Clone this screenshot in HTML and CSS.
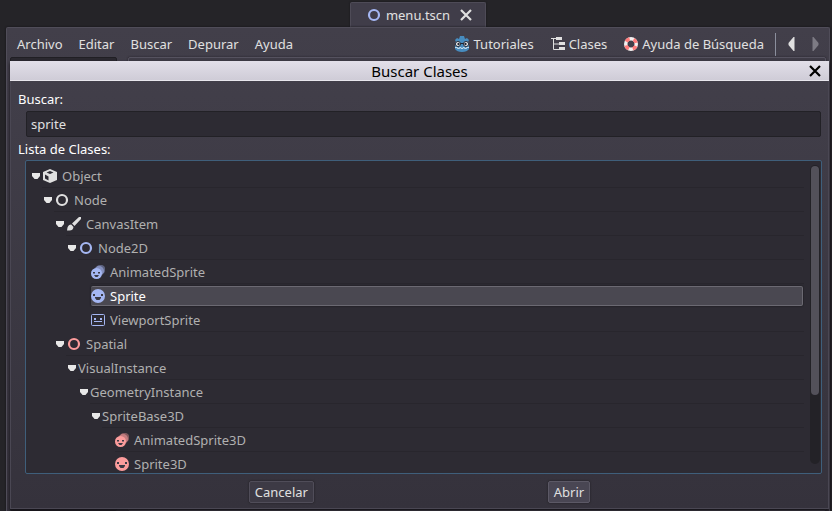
FILE: index.html
```html
<!DOCTYPE html>
<html lang="es">
<head>
<meta charset="utf-8">
<meta name="viewport" content="width=device-width, initial-scale=1">
<title>Buscar Clases</title>
<link rel="stylesheet" href="styles.css">
</head>
<body>
<svg class="defs" aria-hidden="true">
  <symbol id="ring" viewBox="0 0 14 14"><circle cx="7" cy="7" r="5" fill="none" stroke="currentColor" stroke-width="2.200"/></symbol>
  <symbol id="close" viewBox="0 0 12 12"><path d="M1 1l10 10M11 1L1 11" fill="none" stroke="currentColor" stroke-width="2.200"/></symbol>
  <symbol id="fold" viewBox="0 0 8 6"><path d="M0 0h8v3L5.500 6h-3L0 3z" fill="currentColor"/></symbol>
  <symbol id="face" viewBox="0 0 14 14">
    <circle cx="7" cy="7" r="7" fill="currentColor"/>
    <path d="M2 5h2v2H2zM10 5h2v2h-2zM4 8h6v1L8.500 11h-3L4 9z" fill="#3a3944"/>
  </symbol>
  <symbol id="faces" viewBox="0 0 14 14">
    <circle cx="9.500" cy="4.500" r="4.800" fill="currentColor" opacity=".4"/>
    <circle cx="8" cy="6" r="5" fill="currentColor" opacity=".55"/>
    <circle cx="5.500" cy="8.500" r="5.500" fill="currentColor"/>
    <path d="M2 7h2v1.500H2zM7 7h2v1.500H7zM3 10h5l-1.500 2h-2z" fill="#3a3944"/>
  </symbol>
</svg>

<main class="editor">
  <div class="scene-tabs">
    <div class="tab">
      <svg class="icon blue"><use href="#ring"/></svg>
      <span>menu.tscn</span>
      <button class="plain" aria-label="Cerrar escena"><svg class="close"><use href="#close"/></svg></button>
    </div>
  </div>
  <section class="workspace">
    <nav class="toolbar">
      <button class="plain">Archivo</button>
      <button class="plain">Editar</button>
      <button class="plain">Buscar</button>
      <button class="plain">Depurar</button>
      <button class="plain">Ayuda</button>
      <div class="help">
        <button class="plain with-icon">
          <svg class="icon-wide" viewBox="0 0 16 16">
            <path d="M1 4l2-2 2 1 1-3h4l1 3 2-1 2 2-1 2 1 1v6q-2 3-7 3t-7-3V7l1-1z" fill="#478cbf"/>
            <circle cx="4" cy="8" r="2.500" fill="#fff" stroke="#202532"/><circle cx="12" cy="8" r="2.500" fill="#fff" stroke="#202532"/>
            <circle cx="4.500" cy="8" r="1.200" fill="#202532"/><circle cx="11.500" cy="8" r="1.200" fill="#202532"/>
            <path d="M6.500 7.500h3" stroke="#202532"/><path d="M1 11.500h2.500v1h2v-1h1.500v1h2v-1h1.500v1h2v-1H15" stroke="#c5dbea" fill="none"/>
          </svg>Tutoriales</button>
        <button class="plain with-icon">
          <svg class="icon" viewBox="0 0 14 14"><path d="M0 1.500h6M2.500 2v10.500H8M2.500 7H8" fill="none" stroke="#e0e0e0"/><path d="M5 0h6v3H5zM8 5h6v3H8zM8 10h6v3H8z" fill="#e0e0e0"/></svg>Clases</button>
        <button class="plain with-icon">
          <svg class="icon" viewBox="0 0 14 14"><circle cx="7" cy="7" r="5.250" fill="none" stroke="#f4f0f0" stroke-width="3.500"/><circle cx="7" cy="7" r="5.250" fill="none" stroke="#ff7a7a" stroke-width="3.500" stroke-dasharray="4.123 4.123" stroke-dashoffset="-2.060"/></svg>Ayuda de Búsqueda</button>
        <span class="separator"></span>
        <button class="plain" aria-label="Anterior"><svg class="history" viewBox="0 0 6 14"><path d="M6 0v14H5L0 8V6l5-6z" fill="#e0e0e0"/></svg></button>
        <button class="plain" aria-label="Siguiente"><svg class="history" viewBox="0 0 6 14"><path d="M0 0v14h1l5-6V6L1 0z" fill="#7d7b84"/></svg></button>
      </div>
    </nav>
    <div class="panes"><div class="script-list"></div><div class="script-view"></div></div>
  </section>
</main>

<section class="dialog" role="dialog" aria-labelledby="dialog-title">
  <header class="title">
    <h1 id="dialog-title">Buscar Clases</h1>
    <button class="plain dismiss" aria-label="Cerrar"><svg class="close"><use href="#close"/></svg></button>
  </header>
  <div class="body">
    <label for="query">Buscar:</label>
    <input id="query" class="query" type="text" value="sprite">
    <span id="list-label">Lista de Clases:</span>
    <div class="tree">
      <ul class="nodes" role="tree" aria-labelledby="list-label">
        <li><div class="row"><svg class="fold"><use href="#fold"/></svg><span class="cell"><svg class="icon" viewBox="0 0 14 14"><path fill-rule="evenodd" d="M7 0l7 3v8l-7 3-7-3V3zM7 2L3.500 3.500 7 5l3.500-1.500zM2 5.500v4l3.500 2v-4z" fill="currentColor"/></svg>Object</span></div>
          <ul>
            <li><div class="row"><svg class="fold"><use href="#fold"/></svg><span class="cell"><svg class="icon"><use href="#ring"/></svg>Node</span></div>
              <ul>
                <li><div class="row"><svg class="fold"><use href="#fold"/></svg><span class="cell"><svg class="icon" viewBox="0 0 14 14"><path d="M12 0h2v2L7.500 9 5 6.500zM4.200 7.500L6.500 10Q6 13.500 2.500 13.500H0L.5 10.500q1-3 3.700-3z" fill="currentColor"/></svg>CanvasItem</span></div>
                  <ul>
                    <li><div class="row"><svg class="fold"><use href="#fold"/></svg><span class="cell"><svg class="icon blue"><use href="#ring"/></svg>Node2D</span></div>
                      <ul>
                        <li><div class="row leaf"><span class="cell"><svg class="icon blue"><use href="#faces"/></svg>AnimatedSprite</span></div></li>
                        <li><div class="row leaf selected"><span class="cell"><svg class="icon blue"><use href="#face"/></svg>Sprite</span></div></li>
                        <li><div class="row leaf"><span class="cell"><svg class="icon blue" viewBox="0 0 14 14"><rect x=".5" y="1.500" width="13" height="11" rx="1" fill="none" stroke="currentColor"/><path d="M3 5h2v2H3zM9 5h2v2H9zM3 8h8v1H3z" fill="currentColor"/></svg>ViewportSprite</span></div></li>
                      </ul>
                    </li>
                  </ul>
                </li>
                <li><div class="row"><svg class="fold"><use href="#fold"/></svg><span class="cell"><svg class="icon red"><use href="#ring"/></svg>Spatial</span></div>
                  <ul>
                    <li><div class="row"><svg class="fold"><use href="#fold"/></svg><span class="cell bare">VisualInstance</span></div>
                      <ul>
                        <li><div class="row"><svg class="fold"><use href="#fold"/></svg><span class="cell bare">GeometryInstance</span></div>
                          <ul>
                            <li><div class="row"><svg class="fold"><use href="#fold"/></svg><span class="cell bare">SpriteBase3D</span></div>
                              <ul>
                                <li><div class="row leaf"><span class="cell"><svg class="icon red"><use href="#faces"/></svg>AnimatedSprite3D</span></div></li>
                                <li><div class="row leaf"><span class="cell"><svg class="icon red"><use href="#face"/></svg>Sprite3D</span></div></li>
                              </ul>
                            </li>
                          </ul>
                        </li>
                      </ul>
                    </li>
                  </ul>
                </li>
              </ul>
            </li>
          </ul>
        </li>
      </ul>
      <div class="track"><div class="thumb"></div></div>
    </div>
  </div>
  <footer class="actions">
    <button class="action">Cancelar</button>
    <button class="action primary">Abrir</button>
  </footer>
</section>
</body>
</html>
```

FILE: styles.css
```css
* { box-sizing: border-box; }

body {
  margin: 0;
  height: 100vh;
  overflow: hidden;
  background: #252428;
  color: #e0e0e0;
  font: 13px/20px "Noto Sans", "Open Sans", sans-serif;
}

button, input { font: inherit; color: inherit; }
ul { list-style: none; margin: 0; padding: 0; }
svg { display: block; flex: none; }

.defs { position: absolute; width: 0; height: 0; }
.icon { width: 14px; height: 14px; }
.icon-wide { width: 16px; height: 16px; }
.close { width: 12px; height: 12px; }
.fold { width: 8px; height: 6px; color: #e8e8e8; }
.blue { color: #a5b7f3; }
.red { color: #fc9c9c; }

.plain {
  display: flex;
  align-items: center;
  padding: 0;
  border: 0;
  background: none;
}

.editor {
  display: flex;
  flex-direction: column;
  height: 100%;
  padding: 2px 2px 0 6px;
}

.scene-tabs { display: flex; justify-content: center; }

.tab {
  display: flex;
  align-items: center;
  height: 25px;
  padding: 0 13px 0 16px;
  border: 1px solid #4e4b57;
  border-bottom: 0;
  border-radius: 2px 2px 0 0;
  background: #403d49;
  box-shadow: 0 0 2px #151418;
}
.tab span { margin: 0 10px 0 5px; }

.workspace {
  display: flex;
  flex: 1;
  flex-direction: column;
  min-height: 0;
  padding: 0 3px;
  border: 1px solid #504d59;
  border-bottom: 0;
  border-radius: 2px 2px 0 0;
  background: linear-gradient(#423f4a, #35323c 480px);
  box-shadow: 0 0 2px #111014;
}

.toolbar {
  display: flex;
  align-items: center;
  gap: 16px;
  height: 28px;
  padding: 4px 7px 0;
}
.help { display: flex; align-items: center; gap: 17px; margin-left: auto; }
.with-icon { gap: 4px; }
.separator { width: 1px; height: 23px; margin: 0 -5px 0 -6px; background: #8b8f9d; }
.history { width: 7px; height: 14px; }

.panes { display: flex; flex: 1; gap: 11px; min-height: 0; padding-top: 1px; }
.script-list { width: 107px; border: 1px solid #201f24; border-radius: 2px; background: #2b2930; }
.script-view { flex: 1; border: 1px solid #55525f; border-radius: 2px; background: #3e3b46; box-shadow: 0 0 2px #222026; }

.dialog {
  position: absolute;
  inset: 61px 3px 2px 10px;
  display: flex;
  flex-direction: column;
  background: linear-gradient(#423f4a, #35323c);
  border: 1px solid #4a4753;
  border-top: 0;
  box-shadow: 0 2px 3px #131116;
}

.title {
  display: flex;
  align-items: center;
  height: 20px;
  margin: 0 -1px;
  padding: 0 8px 0 20px;
  background: linear-gradient(#e2dfe9, #cfccd7);
  border-bottom: 1px solid #e8e6ed;
  color: #000;
}
.title h1 { flex: 1; margin: 0; font-size: 15px; font-weight: 400; line-height: 20px; text-align: center; }

.body {
  display: flex;
  flex: 1;
  flex-direction: column;
  min-height: 0;
  padding: 8px 7px 0;
  color: #fff;
}

.query {
  height: 26px;
  margin: 2px 0 2px 8px;
  padding: 0 4px;
  border: 1px solid #222126;
  border-radius: 2px;
  background: #2d2b33;
  color: #e0e0e0;
  outline: 0;
}

.tree {
  display: flex;
  flex: 1;
  min-height: 0;
  margin: 1px -1px 0 7px;
  padding: 3px 1px 0 6px;
  border: 1px solid #3f5f7b;
  border-radius: 2px;
  background: #2d2b33;
  color: #b0b0b0;
}

.nodes { flex: 1; overflow: hidden; }
.nodes ul { padding-left: 12px; }

.row { display: flex; align-items: center; height: 24px; }
.cell {
  display: flex;
  flex: 1;
  align-items: center;
  gap: 5px;
  height: 24px;
  margin-left: 2px;
  padding-left: 1px;
  border-bottom: 1px solid #28262d;
}
.bare { padding-left: 0; }
.cell .icon:not(.blue):not(.red) { color: #e0e0e0; }
.leaf .cell { margin-left: 11px; padding-left: 0; }
.selected .cell {
  height: 20px;
  margin-right: 1px;
  border: 1px solid #6b6972;
  border-left: 0;
  border-radius: 2px;
  background: #4a4851;
  box-shadow: 0 0 2px #151418;
  color: #fff;
}

.track {
  width: 10px;
  margin: 1px 0 9px 6px;
  padding: 1px;
  border-radius: 5px;
  background: #232227;
}
.thumb { height: 77%; border-radius: 4px; background: #53515a; }

.actions {
  display: flex;
  justify-content: space-evenly;
  padding: 7px 4px 5px;
}
.action {
  height: 22px;
  padding: 0 5px;
  border: 1px solid #504d59;
  border-radius: 2px;
  background: #3d3a45;
  box-shadow: 0 0 2px #1d1b20;
  line-height: 20px;
}
.primary { background: #494653; border-color: #5c5966; }
```
